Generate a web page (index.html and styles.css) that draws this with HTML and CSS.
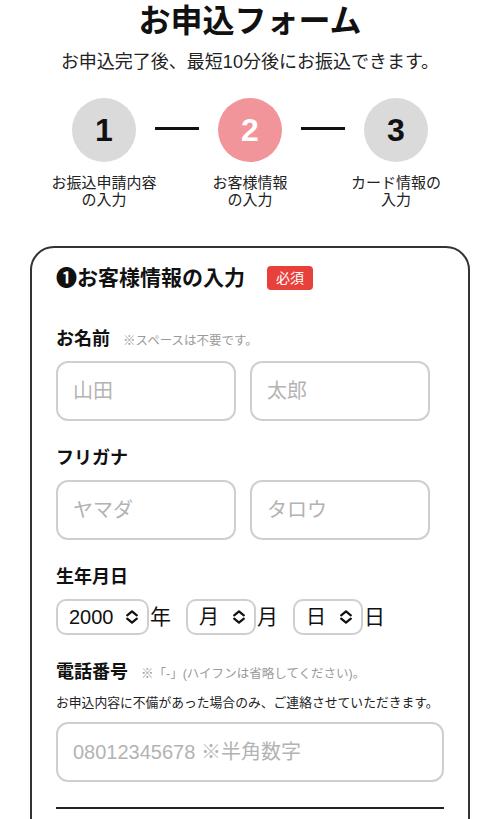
FILE: index.html
```html
<!DOCTYPE html>
<html lang="ja">
<head>
<meta charset="utf-8">
<title>お申込フォーム</title>
<link rel="stylesheet" href="styles.css">
</head>
<body>
<main class="page">
  <h1 class="title">お申込フォーム</h1>
  <p class="lead">お申込完了後、最短10分後にお振込できます。</p>

  <div class="steps">
    <div class="circle">1</div>
    <div class="dash"></div>
    <div class="circle active">2</div>
    <div class="dash"></div>
    <div class="circle">3</div>
  </div>
  <div class="step-labels">
    <div class="step-label">お振込申請内容<br>の入力</div>
    <div class="step-label">お客様情報<br>の入力</div>
    <div class="step-label">カード情報の<br>入力</div>
  </div>

  <section class="card">
    <div class="card-head">
      <h2 class="card-title">❶お客様情報の入力</h2>
      <span class="badge">必須</span>
    </div>

    <div class="field">
      <div class="label-row"><span class="label">お名前</span><span class="note">※スペースは不要です。</span></div>
      <div class="pair">
        <input class="text-input half" type="text" placeholder="山田">
        <input class="text-input half" type="text" placeholder="太郎">
      </div>
    </div>

    <div class="field">
      <div class="label-row"><span class="label">フリガナ</span></div>
      <div class="pair">
        <input class="text-input half" type="text" placeholder="ヤマダ">
        <input class="text-input half" type="text" placeholder="タロウ">
      </div>
    </div>

    <div class="field">
      <div class="label-row"><span class="label">生年月日</span></div>
      <div class="dates">
        <div class="date-group">
          <div class="sel sel-year">
            <select class="select"><option>2000</option></select>
            <svg class="chev" viewBox="0 0 14 14" width="14" height="14"><path d="M2.2 5.4 L7 1.4 L11.8 5.4 M2.2 8.6 L7 12.6 L11.8 8.6" fill="none" stroke="#111" stroke-width="2.2" stroke-linecap="round" stroke-linejoin="round"/></svg>
          </div>
          <span class="unit">年</span>
        </div>
        <div class="date-group">
          <div class="sel sel-small">
            <select class="select"><option>月</option></select>
            <svg class="chev" viewBox="0 0 14 14" width="14" height="14"><path d="M2.2 5.4 L7 1.4 L11.8 5.4 M2.2 8.6 L7 12.6 L11.8 8.6" fill="none" stroke="#111" stroke-width="2.2" stroke-linecap="round" stroke-linejoin="round"/></svg>
          </div>
          <span class="unit">月</span>
        </div>
        <div class="date-group">
          <div class="sel sel-small">
            <select class="select"><option>日</option></select>
            <svg class="chev" viewBox="0 0 14 14" width="14" height="14"><path d="M2.2 5.4 L7 1.4 L11.8 5.4 M2.2 8.6 L7 12.6 L11.8 8.6" fill="none" stroke="#111" stroke-width="2.2" stroke-linecap="round" stroke-linejoin="round"/></svg>
          </div>
          <span class="unit">日</span>
        </div>
      </div>
    </div>

    <div class="field">
      <div class="label-row"><span class="label">電話番号</span><span class="note">※「-」(ハイフンは省略してください)。</span></div>
      <p class="info">お申込内容に不備があった場合のみ、ご連絡させていただきます。</p>
      <input class="text-input full" type="tel" placeholder="08012345678 ※半角数字">
    </div>

    <hr class="rule">
  </section>
</main>
</body>
</html>
```

FILE: styles.css
```css
* { box-sizing: border-box; }

html, body {
  margin: 0;
  padding: 0;
  background: #fff;
}

body {
  font-family: "Liberation Sans", "Noto Sans CJK JP", sans-serif;
  color: #111;
}

.page {
  width: 500px;
  margin: 0 auto;
}

.title {
  margin: 0;
  font-size: 32px;
  line-height: 42px;
  font-weight: 700;
  text-align: center;
  letter-spacing: 0;
}

.lead {
  margin: 8px 0 0;
  font-size: 18px;
  line-height: 24px;
  text-align: center;
  color: #222;
}

.steps {
  margin-top: 24px;
  display: flex;
  justify-content: center;
  align-items: center;
  gap: 19px;
}

.circle {
  width: 64px;
  height: 64px;
  border-radius: 50%;
  background: #dadada;
  display: flex;
  align-items: center;
  justify-content: center;
  font-size: 32px;
  font-weight: 700;
  color: #111;
}

.circle.active {
  background: #f1959b;
  color: #fff;
}

.dash {
  width: 44px;
  height: 3px;
  background: #111;
  margin-top: -3px;
}

.step-labels {
  margin-top: 12px;
  display: grid;
  grid-template-columns: repeat(3, 146px);
  justify-content: center;
}

.step-label {
  text-align: center;
  font-size: 15px;
  line-height: 17px;
  color: #222;
}

.card {
  margin: 38px 30px 0;
  border: 2px solid #333;
  border-radius: 24px;
  padding: 15px 24px 60px;
}

.card-head {
  display: flex;
  align-items: center;
  height: 30px;
}

.card-title {
  margin: 0;
  font-size: 21px;
  line-height: 30px;
  font-weight: 700;
}

.badge {
  margin-left: 22px;
  width: 46px;
  height: 24px;
  border-radius: 4px;
  background: #e8413b;
  color: #fff;
  font-size: 14px;
  line-height: 24px;
  text-align: center;
}

.field {
  margin-top: 25px;
}

.card-head + .field {
  margin-top: 34px;
}

.label-row {
  display: flex;
  align-items: center;
  height: 24px;
  margin-bottom: 10px;
}

.label {
  font-size: 18px;
  line-height: 24px;
  font-weight: 700;
}

.note {
  margin-left: 13px;
  font-size: 12.5px;
  color: #9a9a9a;
}

.pair {
  display: flex;
  gap: 14px;
}

.text-input {
  height: 60px;
  border: 2px solid #cfcfcf;
  border-radius: 12px;
  padding: 0 15px;
  font-family: "Liberation Sans", "Noto Sans CJK JP", sans-serif;
  font-size: 20px;
  color: #111;
  background: #fff;
  outline: none;
}

.text-input::placeholder {
  color: #b3b3b3;
}

.half { width: 180px; }
.full { width: 100%; display: block; }

.dates {
  display: flex;
  align-items: center;
  gap: 15px;
}

.date-group {
  display: flex;
  align-items: center;
}

.sel {
  position: relative;
  height: 36px;
}

.sel-year { width: 93px; }
.sel-small { width: 70px; }

.select {
  -webkit-appearance: none;
  appearance: none;
  width: 100%;
  height: 36px;
  border: 2px solid #cfcfcf;
  border-radius: 10px;
  background: #fff;
  padding: 0 0 0 11px;
  font-family: "Liberation Sans", "Noto Sans CJK JP", sans-serif;
  font-size: 20px;
  color: #111;
  outline: none;
}

.chev {
  position: absolute;
  right: 10px;
  top: 11px;
  pointer-events: none;
}

.unit {
  margin-left: 1px;
  font-size: 21px;
  line-height: 36px;
  color: #111;
}

.info {
  margin: 0 0 10px;
  font-size: 12.8px;
  line-height: 18px;
  white-space: nowrap;
  color: #222;
}

.rule {
  margin: 25px 0 0;
  border: 0;
  height: 2px;
  background: #222;
}
```
